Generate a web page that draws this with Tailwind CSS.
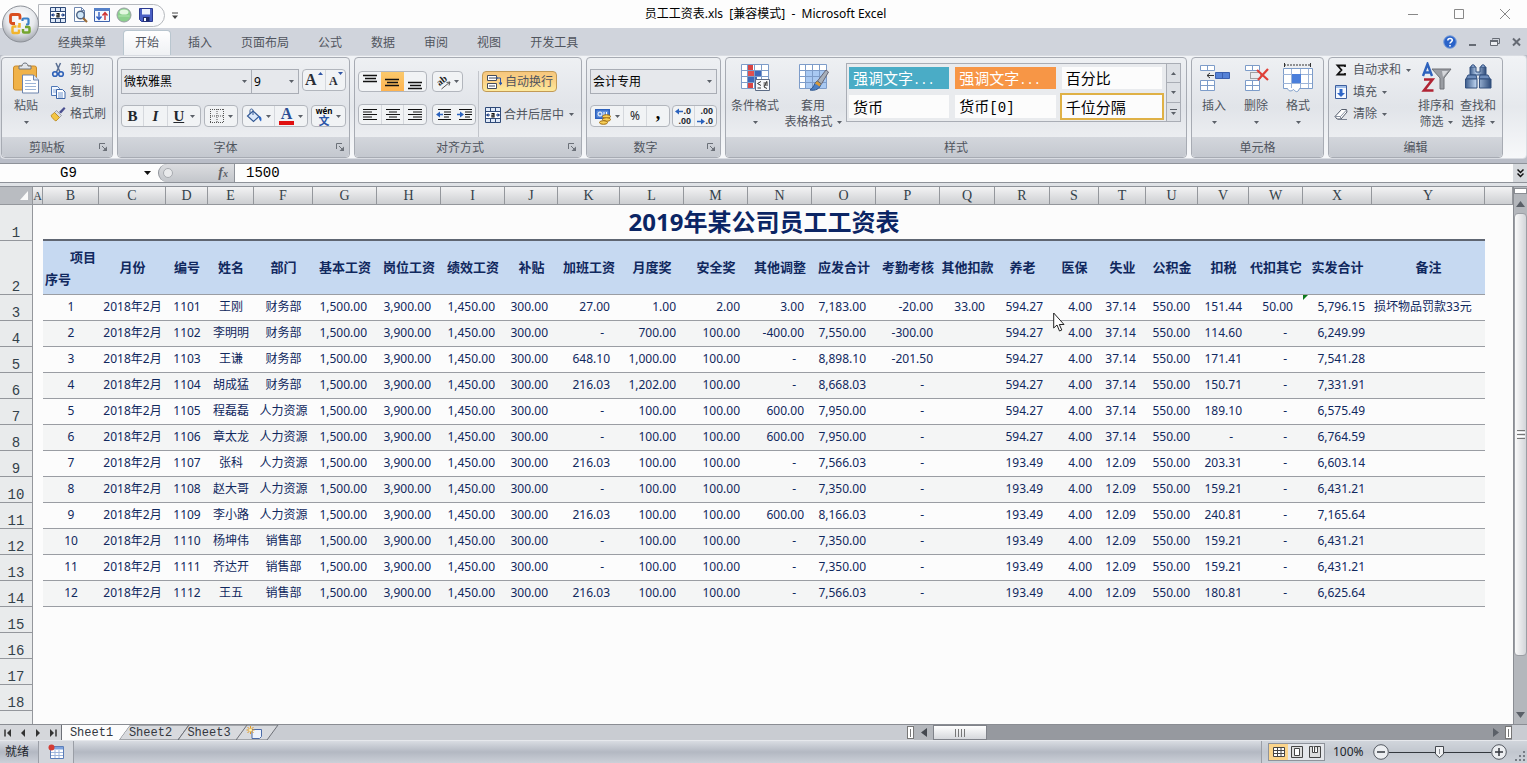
<!DOCTYPE html>
<html lang="zh-CN">
<head>
<meta charset="utf-8">
<title>员工工资表.xls [兼容模式] - Microsoft Excel</title>
<script src="https://cdn.jsdelivr.net/npm/@tailwindcss/browser@4"></script>
</head>
<body class="flex h-screen flex-col overflow-hidden bg-[#bfc3cc] font-['Noto_Sans','Noto_Sans_CJK_SC',sans-serif] text-xs leading-4 text-[#50555e]">

<svg class="hidden" aria-hidden="true">
  <symbol id="dd" viewBox="0 0 5 3"><path d="M0 0h5L2.5 3z" fill="#5b6068"/></symbol>
  <symbol id="launch" viewBox="0 0 9 9"><path d="M.5 6V.5H6M3 3l3 3" fill="none" stroke="#6b7078"/><path d="M8 3.500V8H3.500z" fill="#6b7078"/></symbol>
  <symbol id="merge" viewBox="0 0 16 16"><path d="M.5.5h15v15H.5z" fill="#dfe9f8" stroke="#2f4a78"/><path d="M.5 4.500h15M.5 11.500h15M5.500.5v4M10.500.5v4M5.500 11.500v4M10.500 11.500v4" stroke="#2f4a78"/><path d="M1 5h14v6H1z" fill="#fff"/><path d="M1.500 8H5M11 8h3.500" stroke="#1d3f86"/><path d="M3.500 6v4L1 8zM12.500 6v4L15 8z" fill="#1d3f86"/><path d="M6.500 6.500h2.500v3.500M9 8H7v2h2.600" fill="none" stroke="#111" stroke-width="1.200"/></symbol>
</svg>

<!-- Title bar -->
<header class="relative flex h-7 shrink-0 items-center justify-between bg-[#fdfdfd]">
  <div class="flex items-center pl-[38px]">
    <div class="mt-0.5 flex h-[23px] items-center gap-1.5 rounded-r-full border border-[#b5b8bd] bg-[#fbfbfc] pr-2.5 pl-[11px]">
      <button aria-label="合并后居中"><svg class="size-4"><use href="#merge"/></svg></button>
      <button aria-label="打印预览"><svg class="size-4" viewBox="0 0 16 16"><path d="M2.500.5h7l3 3v11h-10z" fill="#fff" stroke="#7088b0"/><path d="M9.500.5v3h3" fill="none" stroke="#7088b0"/><circle cx="8.500" cy="8" r="3.800" fill="#cfe6f8" stroke="#4d6284" stroke-width="1.400"/><path d="M11 11l4 4" stroke="#9a6a35" stroke-width="2.200"/></svg></button>
      <button aria-label="排序"><svg class="size-4" viewBox="0 0 16 16"><path d="M.5 1.500h15v13H.5z" fill="#f3f7fe" stroke="#3f63ac"/><path d="M0 1h16v3H0z" fill="#5580c8"/><path d="M5 5v7M2.500 9.500L5 12.500l2.500-3" fill="none" stroke="#2e5bc0" stroke-width="1.400"/><path d="M11 13V6M8.500 8.500L11 5.500l2.500 3" fill="none" stroke="#d03030" stroke-width="1.400"/></svg></button>
      <button aria-label="绿灯"><svg class="size-4" viewBox="0 0 16 16"><circle cx="8" cy="8" r="7" fill="#8bd08d" stroke="#9a9fa5"/><ellipse cx="8" cy="5" rx="4.500" ry="2.600" fill="#e2f7e0"/><path d="M2.500 9h11" stroke="#b5e6b4"/></svg></button>
      <button aria-label="保存"><svg class="size-4" viewBox="0 0 16 16"><path d="M1.500 1.500h13v13h-11l-2-2z" fill="#4a5fc4" stroke="#2b3a90"/><path d="M4 2h8v5.500H4z" fill="#eef2fd"/><path d="M5 10h6.500v4.500H5z" fill="#1f2b6b"/><path d="M6 11h2v3H6z" fill="#fff"/></svg></button>
    </div>
    <button class="ml-1.5 pt-1" aria-label="自定义快速访问工具栏"><svg class="h-2 w-2" viewBox="0 0 8 8"><path d="M1 1h6" stroke="#444"/><path d="M1 3.500h6L4 7z" fill="#444"/></svg></button>
  </div>
  <h1 class="pointer-events-none absolute inset-x-0 top-1.5 pl-1 text-center whitespace-pre text-black">员工工资表.xls  [兼容模式]  -  Microsoft Excel</h1>
  <div class="flex gap-[34px] pr-4">
    <button aria-label="最小化"><svg class="size-3" viewBox="0 0 12 12"><path d="M1 6.500h10" stroke="#888"/></svg></button>
    <button aria-label="最大化"><svg class="size-3" viewBox="0 0 12 12"><path d="M1.500 1.500h9v9h-9z" fill="none" stroke="#888"/></svg></button>
    <button aria-label="关闭"><svg class="size-3" viewBox="0 0 12 12"><path d="M1 1l10 10M11 1L1 11" stroke="#888"/></svg></button>
  </div>
  <button class="absolute top-1 left-0.5 z-10" aria-label="Office 按钮">
    <svg class="size-10" viewBox="0 0 40 40"><defs><radialGradient id="orb" cx=".5" cy=".35" r=".65"><stop offset="0" stop-color="#fff"/><stop offset=".6" stop-color="#e7e9ed"/><stop offset="1" stop-color="#a3a7af"/></radialGradient></defs><circle cx="18.500" cy="20" r="18" fill="url(#orb)" stroke="#8d9198"/>
      <path d="M13 19.500h-2.500a2 2 0 0 1-2-2v-5a2 2 0 0 1 2-2h5.500a2 2 0 0 1 2 2v3" fill="none" stroke="#d94e20" stroke-width="2.800"/>
      <path d="M20.500 17v-1.500a1 1 0 0 1 1-1h4a1 1 0 0 1 1 1v4a1 1 0 0 1-1 1H24" fill="none" stroke="#3b82c8" stroke-width="2.200"/>
      <path d="M14.500 22.500h-3a1 1 0 0 0-1 1v4.500a1 1 0 0 0 1 1h4.500a1 1 0 0 0 1-1v-2.500M17.500 19v3.500h-2" fill="none" stroke="#f2b52c" stroke-width="2.500"/>
      <path d="M21 25v2.500a1 1 0 0 0 1 1h4.500a1 1 0 0 0 1-1V24a1 1 0 0 0-1-1H23" fill="none" stroke="#74a52e" stroke-width="2.500"/></svg>
  </button>
</header>

<!-- Ribbon tabs -->
<nav class="flex h-[27px] shrink-0 items-end justify-between bg-[#d0d4dc] pl-[46px]">
  <div class="flex gap-[5px]">
    <button class="h-[25px] px-3">经典菜单</button>
    <button class="h-[25px] rounded-t border border-b-0 border-[#b9c6cf] bg-linear-to-b from-white to-[#eff1f4] px-[11px]">开始</button>
    <button class="h-[25px] px-3">插入</button>
    <button class="h-[25px] px-3">页面布局</button>
    <button class="h-[25px] px-3">公式</button>
    <button class="h-[25px] px-3">数据</button>
    <button class="h-[25px] px-3">审阅</button>
    <button class="h-[25px] px-3">视图</button>
    <button class="h-[25px] px-3">开发工具</button>
  </div>
  <div class="flex items-center gap-2.5 self-center pr-1">
    <button aria-label="帮助"><svg class="size-3.5" viewBox="0 0 14 14"><circle cx="7" cy="7" r="6.300" fill="#2a63c9" stroke="#7ea0d8"/><path d="M4.800 5.500C4.800 2.800 9.300 2.800 9.300 5.300 9.300 6.800 7 6.800 7 8.600M7 10v1.400" fill="none" stroke="#fff" stroke-width="1.600"/></svg></button>
    <button aria-label="最小化工作簿"><svg class="h-3 w-3" viewBox="0 0 12 12"><path d="M2 9h7" stroke="#666b74" stroke-width="2"/></svg></button>
    <button aria-label="还原工作簿"><svg class="h-3 w-3" viewBox="0 0 12 12"><path d="M3.500 3.500v-1h7v5h-2" fill="none" stroke="#666b74"/><path d="M1.500 4.500h7v5h-7z" fill="#eceef2" stroke="#666b74"/><path d="M1 5h8" stroke="#666b74" stroke-width="2"/></svg></button>
    <button aria-label="关闭工作簿"><svg class="h-3 w-3" viewBox="0 0 12 12"><path d="M2 2.500l7 7M9 2.500l-7 7" stroke="#666b74" stroke-width="2"/></svg></button>
  </div>
</nav>

<!-- Ribbon -->
<section class="h-[108px] shrink-0 bg-[#b9bdc7]" aria-label="功能区">
  <div class="flex h-[104px] gap-1 rounded border border-[#d9dce2] bg-linear-to-b from-[#f1f3f6] via-[#e6e9ed] to-[#f7f8fa] pt-px">

    <!-- 剪贴板 -->
    <div class="flex h-[101px] w-[112px] shrink-0 flex-col rounded border border-[#a7abb3] bg-linear-to-b from-[#eef0f3] via-[#e1e4e9] to-[#f3f4f6]">
      <div class="flex flex-1 pl-2">
        <button class="flex w-8 flex-col items-center pt-1">
          <svg class="size-8" viewBox="0 0 32 32"><rect x="3.500" y="4" width="23" height="24" rx="2" fill="#f0b248" stroke="#c8892b"/><path d="M9 7V4h3c0-4 6-4 6 0h3v3z" fill="#e3e6ea" stroke="#6e747d"/><path d="M12.500 13h11l5 5v13h-16z" fill="#fff" stroke="#6d84ad"/><path d="M23.500 13v5h5" fill="#dbe6f7" stroke="#6d84ad"/><path d="M15 18.500h6M15 21.500h11M15 24.500h11M15 27.500h11" stroke="#9db5d8"/></svg>
          <span class="mt-1">粘贴</span><span class="flex h-4 items-center"><svg class="h-[3px] w-[5px]"><use href="#dd"/></svg></span>
        </button>
        <div class="flex flex-col items-start pt-px pl-2">
          <button class="flex h-[22px] items-center gap-1"><svg class="size-4" viewBox="0 0 16 16"><path d="M6 1l4 9M10.500 1l-4 9" stroke="#5a6f93" stroke-width="1.500"/><circle cx="5" cy="12" r="2.300" fill="none" stroke="#2f62b8" stroke-width="1.600"/><circle cx="11" cy="12" r="2.300" fill="none" stroke="#2f62b8" stroke-width="1.600"/></svg>剪切</button>
          <button class="flex h-[22px] items-center gap-1"><svg class="size-4" viewBox="0 0 16 16"><path d="M1.500 2.500h6l2 2v7h-8z" fill="#f2f7ff" stroke="#4e77b6"/><path d="M3 6h5M3 8h5" stroke="#89a9d8"/><path d="M6.500 5.500h6l2.500 2.500v6.500H6.500z" fill="#fff" stroke="#3c66a8"/><path d="M8 9h5M8 11h5M8 13h5" stroke="#6f95cf"/></svg>复制</button>
          <button class="flex h-[22px] items-center gap-1"><svg class="size-4" viewBox="0 0 16 16"><path d="M9 6l5-5 1.500 1.500-4.500 5z" fill="#4a4f8f"/><path d="M6.500 4.500l5 5-2 2-5-5z" fill="#d8dbe2" stroke="#7d828c" stroke-width=".7"/><path d="M4.500 6.500l5 5L6 15C4 14 2 12 1 9.500z" fill="#f4c644" stroke="#b78518" stroke-width=".8"/></svg>格式刷</button>
        </div>
      </div>
      <div class="relative h-5 rounded-b bg-linear-to-b from-[#d3d6dc] to-[#c4c8cf] pr-5 text-center leading-[22px]">剪贴板<button class="absolute top-1.5 right-1" aria-label="剪贴板选项"><svg class="block size-[9px]"><use href="#launch"/></svg></button></div>
    </div>

    <!-- 字体 -->
    <div class="flex h-[101px] w-[233px] shrink-0 flex-col rounded border border-[#a7abb3] bg-linear-to-b from-[#eef0f3] via-[#e1e4e9] to-[#f3f4f6]">
      <div class="flex flex-1 flex-col gap-[11px] px-[3px] pt-[11px]">
        <div class="flex items-start">
          <label class="relative block w-[131px]"><span class="sr-only">字体</span><select class="h-[25px] w-full appearance-none border border-[#a9adb5] bg-[#e6e8ec] pl-0.5 text-xs leading-5 text-black"><option>微软雅黑</option></select><svg class="pointer-events-none absolute top-[11px] right-[5px] h-[3px] w-[5px]"><use href="#dd"/></svg></label>
          <label class="relative block w-[47px]"><span class="sr-only">字号</span><select class="h-[25px] w-full appearance-none border border-l-0 border-[#a9adb5] bg-[#e6e8ec] pl-0.5 text-xs leading-5 text-black"><option>9</option></select><svg class="pointer-events-none absolute top-[11px] right-[5px] h-[3px] w-[5px]"><use href="#dd"/></svg></label>
          <div class="ml-auto flex h-[22px] w-11 rounded-sm border border-[#b2b6bd] bg-[#f1f3f5] font-['Liberation_Serif',serif] font-bold text-[#2b2f36]">
            <button class="relative flex-1 border-r border-[#d5d8dd] pr-1.5 text-base leading-5" aria-label="增大字号">A<svg class="absolute top-0.5 right-0.5 h-[3px] w-[5px] rotate-180" viewBox="0 0 5 3"><path d="M0 0h5L2.500 3z" fill="#2f55a5"/></svg></button>
            <button class="relative flex-1 pt-0.5 pr-1 text-xs" aria-label="减小字号">A<svg class="absolute top-0.5 right-0.5 h-[3px] w-[5px]" viewBox="0 0 5 3"><path d="M0 0h5L2.500 3z" fill="#2f55a5"/></svg></button>
          </div>
        </div>
        <div class="flex h-[22px] justify-between">
          <div class="flex w-20 items-stretch rounded-sm border border-[#b2b6bd] bg-[#f1f3f5] font-['Liberation_Serif',serif] text-[15px] font-bold text-[#22262c]">
            <button class="w-[22px] border-r border-[#d5d8dd]">B</button><button class="w-6 border-r border-[#d5d8dd] italic">I</button>
            <button class="flex flex-1 items-center justify-evenly"><span class="underline">U</span><svg class="h-[3px] w-[5px]"><use href="#dd"/></svg></button>
          </div>
          <div class="flex w-[34px] rounded-sm border border-[#b2b6bd] bg-[#f1f3f5]"><button class="flex flex-1 items-center justify-evenly" aria-label="边框"><svg class="size-3.5" viewBox="0 0 14 14"><path d="M.5 0v14M7 0v14M13.500 0v14M0 .5h14M0 7h14M0 13.500h14" stroke="#555" stroke-dasharray="1 1"/></svg><svg class="h-[3px] w-[5px]"><use href="#dd"/></svg></button></div>
          <div class="flex w-[66px] rounded-sm border border-[#b2b6bd] bg-[#f1f3f5]">
            <button class="flex flex-1 items-center justify-evenly border-r border-[#d5d8dd]" aria-label="填充颜色"><svg class="size-4" viewBox="0 0 16 16"><path d="M7 3l6 5.500-5.500 5L1.500 8z" fill="#dbe8fa" stroke="#345a96" stroke-width="1.200"/><path d="M7 7V2.500C7 .5 4 .5 4 2.500V6" fill="none" stroke="#345a96"/><path d="M13 8c2.500.5 3 3 2 5.500-1.500-1-2.500-3-2-5.500z" fill="#2b66c4"/></svg><svg class="h-[3px] w-[5px]"><use href="#dd"/></svg></button>
            <button class="flex flex-1 items-center justify-evenly" aria-label="字体颜色"><span class="border-b-4 border-[#e01010] px-0.5 font-['Liberation_Serif',serif] text-base leading-[14px] font-bold text-[#2c4f94]">A</span><svg class="h-[3px] w-[5px]"><use href="#dd"/></svg></button>
          </div>
          <div class="flex w-[35px] rounded-sm border border-[#b2b6bd] bg-[#f1f3f5]"><button class="flex flex-1 items-center justify-evenly" aria-label="拼音指南"><span class="flex flex-col items-center text-[8px] leading-[8px] font-bold text-black"><span>wén</span><span class="text-[11px] leading-[11px] text-[#2b56a8]">文</span></span><svg class="h-[3px] w-[5px]"><use href="#dd"/></svg></button></div>
        </div>
      </div>
      <div class="relative h-5 rounded-b bg-linear-to-b from-[#d3d6dc] to-[#c4c8cf] pr-4 text-center leading-[22px]">字体<button class="absolute top-1.5 right-1" aria-label="字体选项"><svg class="block size-[9px]"><use href="#launch"/></svg></button></div>
    </div>

    <!-- 对齐方式 -->
    <div class="flex h-[101px] w-[228px] shrink-0 flex-col rounded border border-[#a7abb3] bg-linear-to-b from-[#eef0f3] via-[#e1e4e9] to-[#f3f4f6]">
      <div class="flex flex-1 pt-[13px] pl-[3px]">
        <div class="flex w-[121px] flex-col gap-3 border-r border-[#c2c5cb]">
          <div class="flex h-[21px] gap-[5px]">
            <div class="flex w-[69px] rounded-sm border border-[#b2b6bd] bg-[#f1f3f5]">
              <button class="flex flex-1 justify-center pt-0.5" aria-label="顶端对齐"><svg class="size-3.5" viewBox="0 0 14 14"><path d="M0 1.500h14M2 4.500h11M0 7.500h14" stroke="#111" stroke-width="1.500"/></svg></button>
              <button class="flex flex-1 items-center justify-center bg-linear-to-b from-[#fbc96b] to-[#fdb350]" aria-label="垂直居中"><svg class="size-3.5" viewBox="0 0 14 14"><path d="M0 4.500h14M2 7.500h11M0 10.500h14" stroke="#111" stroke-width="1.500"/></svg></button>
              <button class="flex flex-1 items-end justify-center" aria-label="底端对齐"><svg class="size-3.5" viewBox="0 0 14 14"><path d="M0 5.500h14M2 8.500h11M0 11.500h14" stroke="#111" stroke-width="1.500"/></svg></button>
            </div>
            <div class="flex w-[31px] rounded-sm border border-[#b2b6bd] bg-[#f1f3f5]"><button class="flex flex-1 items-center justify-evenly" aria-label="方向"><svg class="size-4" viewBox="0 0 16 16"><text x="1" y="11" font-family="Liberation Serif" font-size="10" font-weight="bold" fill="#222" transform="rotate(-38 4 8)">ab</text><path d="M5.500 15l8.500-7M14 8l-3.500.5M14 8l-1 3.500" stroke="#555" fill="none"/></svg><svg class="h-[3px] w-[5px]"><use href="#dd"/></svg></button></div>
          </div>
          <div class="flex h-[21px] gap-[5px]">
            <div class="flex w-[69px] rounded-sm border border-[#b2b6bd] bg-[#f1f3f5]">
              <button class="flex flex-1 items-center justify-center border-r border-[#d5d8dd]" aria-label="文本左对齐"><svg class="h-3 w-3.5" viewBox="0 0 14 12"><path d="M0 .5h14M0 3h9M0 5.500h14M0 8h9M0 10.500h14" stroke="#111"/></svg></button>
              <button class="flex flex-1 items-center justify-center border-r border-[#d5d8dd]" aria-label="居中"><svg class="h-3 w-3.5" viewBox="0 0 14 12"><path d="M0 .5h14M3 3h8M0 5.500h14M3 8h8M0 10.500h14" stroke="#111"/></svg></button>
              <button class="flex flex-1 items-center justify-center" aria-label="文本右对齐"><svg class="h-3 w-3.5" viewBox="0 0 14 12"><path d="M0 .5h14M5 3h9M0 5.500h14M5 8h9M0 10.500h14" stroke="#111"/></svg></button>
            </div>
            <div class="flex w-11 rounded-sm border border-[#b2b6bd] bg-[#f1f3f5]">
              <button class="flex flex-1 items-center justify-center" aria-label="减少缩进量"><svg class="size-4" viewBox="0 0 16 14"><path d="M2 1.500h13M8 4h7M8 6.500h7M8 9h5M2 11.500h13" stroke="#111" stroke-width="1.200"/><path d="M0 6.500L4 3.500v6z" fill="#2b62bd"/><path d="M3 6.500h4" stroke="#2b62bd" stroke-width="1.500"/></svg></button>
              <button class="flex flex-1 items-center justify-center" aria-label="增加缩进量"><svg class="size-4" viewBox="0 0 16 14"><path d="M2 1.500h13M8 4h7M8 6.500h7M8 9h5M2 11.500h13" stroke="#111" stroke-width="1.200"/><path d="M7 6.500L3 3.500v6z" fill="#2b62bd"/><path d="M0 6.500h4" stroke="#2b62bd" stroke-width="1.500"/></svg></button>
            </div>
          </div>
        </div>
        <div class="flex flex-col items-start gap-3 pl-[3px]">
          <button class="flex h-[21px] items-center gap-[3px] rounded-sm border border-[#c29a55] bg-linear-to-b from-[#f6c77d] via-[#fbd388] to-[#fdea9c] px-[3px]"><svg class="size-4" viewBox="0 0 16 16"><path d="M1.500 1.500h9v5h-9zM1.500 9.500h9v5h-9z" fill="#fff" stroke="#444c5c"/><path d="M3 4h9M3 12h6" stroke="#444c5c"/><path d="M10 4h4.500v5" fill="none" stroke="#2b56a8"/><path d="M12.500 8.500h4l-2 3z" fill="#2b56a8"/></svg>自动换行</button>
          <button class="flex h-[21px] items-center gap-[3px] pr-1 pl-[3px]"><svg class="size-4"><use href="#merge"/></svg>合并后居中<svg class="ml-0.5 h-[3px] w-[5px]"><use href="#dd"/></svg></button>
        </div>
      </div>
      <div class="relative h-5 rounded-b bg-linear-to-b from-[#d3d6dc] to-[#c4c8cf] pr-4 text-center leading-[22px]">对齐方式<button class="absolute top-1.5 right-1" aria-label="对齐方式选项"><svg class="block size-[9px]"><use href="#launch"/></svg></button></div>
    </div>

    <!-- 数字 -->
    <div class="flex h-[101px] w-[135px] shrink-0 flex-col rounded border border-[#a7abb3] bg-linear-to-b from-[#eef0f3] via-[#e1e4e9] to-[#f3f4f6]">
      <div class="flex flex-1 flex-col gap-[11px] px-[3px] pt-[11px]">
        <label class="relative block"><span class="sr-only">数字格式</span><select class="h-[25px] w-full appearance-none border border-[#a9adb5] bg-[#e6e8ec] pl-0.5 text-xs leading-5 text-black"><option>会计专用</option></select><svg class="pointer-events-none absolute top-[11px] right-[5px] h-[3px] w-[5px]"><use href="#dd"/></svg></label>
        <div class="flex h-[22px] justify-between">
          <div class="flex w-20 rounded-sm border border-[#b2b6bd] bg-[#f1f3f5] text-[#22262c]">
            <button class="flex w-[33px] items-center justify-evenly border-r border-[#d5d8dd]" aria-label="会计数字格式"><svg class="size-[18px]" viewBox="0 0 18 18"><path d="M1 2h15v10H1z" fill="#2d61bd"/><path d="M2.500 3.500h12v7h-12z" fill="#5d8fdd"/><circle cx="6" cy="7" r="2" fill="none" stroke="#fff"/><path d="M10 5v4M12.500 5v4" stroke="#fff"/><ellipse cx="12.500" cy="9.500" rx="4" ry="1.800" fill="#f7cf58" stroke="#a06c10"/><ellipse cx="12.500" cy="12.500" rx="4" ry="1.800" fill="#f7cf58" stroke="#a06c10"/><ellipse cx="9.500" cy="15.500" rx="4" ry="1.800" fill="#f7cf58" stroke="#a06c10"/></svg><svg class="h-[3px] w-[5px]"><use href="#dd"/></svg></button>
            <button class="flex-1 border-r border-[#d5d8dd]">%</button><button class="flex-1 pb-1.5 font-['Liberation_Serif',serif] text-lg leading-3 font-bold text-black">,</button>
          </div>
          <div class="flex w-[45px] rounded-sm border border-[#b2b6bd] bg-[#f1f3f5] font-['Liberation_Sans',sans-serif] text-[9px] leading-[10px] font-bold text-[#22262c]">
            <button class="flex flex-1 flex-col items-end justify-center border-r border-[#d5d8dd] pr-[3px]" aria-label="增加小数位数"><span class="flex items-center"><svg class="h-[7px] w-2" viewBox="0 0 8 7"><path d="M0 3.500L4 .5v6z" fill="#2b62bd"/><path d="M3 3.500h5" stroke="#2b62bd" stroke-width="1.500"/></svg>.0</span><span>.00</span></button>
            <button class="flex flex-1 flex-col items-end justify-center pr-[3px]" aria-label="减少小数位数"><span>.00</span><span class="flex items-center"><svg class="h-[7px] w-2" viewBox="0 0 8 7"><path d="M8 3.500L4 .5v6z" fill="#2b62bd"/><path d="M0 3.500h5" stroke="#2b62bd" stroke-width="1.500"/></svg>.0</span></button>
          </div>
        </div>
      </div>
      <div class="relative h-5 rounded-b bg-linear-to-b from-[#d3d6dc] to-[#c4c8cf] pr-4 text-center leading-[22px]">数字<button class="absolute top-1.5 right-1" aria-label="数字选项"><svg class="block size-[9px]"><use href="#launch"/></svg></button></div>
    </div>

    <!-- 样式 -->
    <div class="flex h-[101px] w-[462px] shrink-0 flex-col rounded border border-[#a7abb3] bg-linear-to-b from-[#eef0f3] via-[#e1e4e9] to-[#f3f4f6]">
      <div class="flex flex-1 pl-[5px]">
        <button class="flex w-12 flex-col items-center pt-1">
          <svg class="size-8" viewBox="0 0 32 32"><path d="M2.500 2.500h27v24h-27z" fill="#fff" stroke="#7d9cc9"/><path d="M8 3h6v5H8zM8 21h6v5H8z" fill="#d84444"/><path d="M9 8h13v6H9z" fill="#e05050"/><path d="M16 8h6v6h-6zM9 14h9v6H9z" fill="#3f68b8"/><path d="M2 8.500h27M2 14.500h27M2 20.500h27M8.500 2v25M15.500 2v25M22.500 2v25" stroke="#7d9cc9"/><path d="M16.500 17.500h14v11h-14z" fill="#f5f7fb" stroke="#5c6b85"/><path d="M22 19.500l-3.500 2 3.500 2M18.500 26H22M24.500 21h4.500M24.500 23h4.500M28 19l-3 6M25 25l3 1.500" stroke="#333" fill="none"/></svg>
          <span class="mt-1">条件格式</span><span class="flex h-4 items-center"><svg class="h-[3px] w-[5px]"><use href="#dd"/></svg></span>
        </button>
        <button class="ml-1 flex w-[60px] flex-col items-center pt-1">
          <svg class="size-8" viewBox="0 0 32 32"><path d="M2.500 2.500h27v24h-27z" fill="#fff" stroke="#7d9cc9"/><path d="M9 9h20v17H9z" fill="#a9c9f2"/><path d="M2 8.500h27M2 14.500h27M2 20.500h27M8.500 2v25M15.500 2v25M22.500 2v25" stroke="#7d9cc9"/><path d="M29 8l2.500 2-7 12-4-3z" fill="#a8b0ba" stroke="#667"/><path d="M20 19l4 3c-1 5-6 7-11 6 4-2 4-7 7-9z" fill="#4b7fc4" stroke="#2f578f"/><path d="M20 19l4 3-1.500 2.500-4.500-3z" fill="#d79a3b"/></svg>
          <span class="mt-1">套用</span><span class="flex h-4 items-center gap-1 whitespace-nowrap">表格格式<svg class="h-[3px] w-[5px]"><use href="#dd"/></svg></span>
        </button>
        <div class="mt-[5px] ml-[3px] flex h-[59px] w-[335px] border border-[#a9adb5] bg-[#e9ebee]">
          <div class="grid flex-1 grid-cols-3 gap-x-1.5 gap-y-1.5 py-[3px] pr-1 pl-0.5 text-[15px] leading-5 text-black">
            <button class="bg-[#4aacc6] pl-1 text-left text-white">强调文字<span class="font-['Liberation_Mono',monospace] text-xs">...</span></button>
            <button class="bg-[#f79646] pl-1 text-left text-white">强调文字<span class="font-['Liberation_Mono',monospace] text-xs">...</span></button>
            <button class="bg-[#fcfcfc] pl-1 text-left">百分比</button>
            <button class="bg-[#fcfcfc] pl-1 text-left">货币</button>
            <button class="bg-[#fcfcfc] pl-1 text-left">货币<span class="font-['Liberation_Mono',monospace] text-sm">[0]</span></button>
            <button class="bg-[#fcfcfc] pl-1 text-left outline-2 outline-[#dfb146]">千位分隔</button>
          </div>
          <div class="flex w-3.5 flex-col border-l border-[#a9adb5] bg-[#dde0e5]">
            <button class="flex flex-1 items-center justify-center" aria-label="上一行"><svg class="h-[3px] w-[5px] rotate-180"><use href="#dd"/></svg></button>
            <button class="flex flex-1 items-center justify-center border-y border-[#a9adb5]" aria-label="下一行"><svg class="h-[3px] w-[5px]"><use href="#dd"/></svg></button>
            <button class="flex flex-1 flex-col items-center justify-center gap-0.5" aria-label="更多样式"><span class="h-px w-[7px] bg-[#5b6068]"></span><svg class="h-[3px] w-[5px]"><use href="#dd"/></svg></button>
          </div>
        </div>
      </div>
      <div class="h-5 rounded-b bg-linear-to-b from-[#d3d6dc] to-[#c4c8cf] text-center leading-[22px]">样式</div>
    </div>

    <!-- 单元格 -->
    <div class="flex h-[101px] w-[133px] shrink-0 flex-col rounded border border-[#a7abb3] bg-linear-to-b from-[#eef0f3] via-[#e1e4e9] to-[#f3f4f6]">
      <div class="flex flex-1 pl-px">
        <button class="flex w-[42px] flex-col items-center pt-1">
          <svg class="size-8" viewBox="0 0 32 32"><path d="M2.500 3.500h14v5h-14zM2.500 18.500h14v10h-14zM9.500 3.500v5M9.500 18.500v10M2.500 23.500h14" fill="#fff" stroke="#7d9cc9"/><path d="M17.500 10.500h14v6h-14z" fill="#5581d6" stroke="#3a5fae"/><path d="M24.500 10.500v6" stroke="#3a5fae"/><path d="M9 13.500h7M12 11l-3 2.500L12 16" fill="none" stroke="#333"/></svg>
          <span class="mt-1">插入</span><span class="flex h-4 items-center"><svg class="h-[3px] w-[5px]"><use href="#dd"/></svg></span>
        </button>
        <button class="flex w-[42px] flex-col items-center pt-1">
          <svg class="size-8" viewBox="0 0 32 32"><path d="M5.500 3.500h14v5h-14zM5.500 18.500h14v10h-14zM12.500 3.500v5M12.500 18.500v10M5.500 23.500h14" fill="#fff" stroke="#7d9cc9"/><path d="M10.500 10.500h10v6h-10z" fill="none" stroke="#555" stroke-dasharray="1 1"/><path d="M17 8l11 10M28 7L18 18" stroke="#e04038" stroke-width="2.200"/></svg>
          <span class="mt-1">删除</span><span class="flex h-4 items-center"><svg class="h-[3px] w-[5px]"><use href="#dd"/></svg></span>
        </button>
        <button class="flex w-[42px] flex-col items-center pt-1">
          <svg class="size-8" viewBox="0 0 32 32"><path d="M1.500 6.500h29v20h-13c-2 5-4 3-6 1-2 2-5 2-6-1h-4z" fill="#fff" stroke="#7d9cc9"/><path d="M1 12.500h29M1 21.500h29M9.500 7v19M18.500 7v19M26.500 7v19" stroke="#9cb4d8"/><path d="M10 12h9v9h-9z" fill="#4b7fdb"/><path d="M2 3h26" stroke="#333" stroke-dasharray="2 1"/><path d="M2.500 1v4M28.500 1v4" stroke="#333"/></svg>
          <span class="mt-1">格式</span><span class="flex h-4 items-center"><svg class="h-[3px] w-[5px]"><use href="#dd"/></svg></span>
        </button>
      </div>
      <div class="h-5 rounded-b bg-linear-to-b from-[#d3d6dc] to-[#c4c8cf] text-center leading-[22px]">单元格</div>
    </div>

    <!-- 编辑 -->
    <div class="flex h-[101px] w-[175px] shrink-0 flex-col rounded border border-[#a7abb3] bg-linear-to-b from-[#eef0f3] via-[#e1e4e9] to-[#f3f4f6]">
      <div class="flex flex-1 justify-between pr-1.5 pl-1">
        <div class="flex flex-col items-start pt-px">
          <button class="flex h-[22px] items-center gap-1"><svg class="size-4" viewBox="0 0 16 16"><path d="M12 5V3.500H4.500L8.500 8l-4 4.500H12V11" fill="none" stroke="#111" stroke-width="1.800"/></svg>自动求和<svg class="ml-px h-[3px] w-[5px]"><use href="#dd"/></svg></button>
          <button class="flex h-[22px] items-center gap-1"><svg class="size-4" viewBox="0 0 16 16"><path d="M2.500 1.500h11v13h-11z" fill="#f5f9ff" stroke="#3d5f9e"/><path d="M3 2h10v2H3z" fill="#9fbde8"/><path d="M6.500 5h3v4H12l-4 4-4-4h2.500z" fill="#2f67c8"/></svg>填充<svg class="ml-px h-[3px] w-[5px]"><use href="#dd"/></svg></button>
          <button class="flex h-[22px] items-center gap-1"><svg class="size-4" viewBox="0 0 16 16"><path d="M2 10.500L8.500 3.500h5L14 6l-6 7H4z" fill="#fff" stroke="#555d6b"/><path d="M2 10.500h5.500L13.500 4M7.500 10.500V13" fill="none" stroke="#8891a0"/><path d="M5 13.500h9" stroke="#7b8392"/></svg>清除<svg class="ml-px h-[3px] w-[5px]"><use href="#dd"/></svg></button>
        </div>
        <div class="flex gap-1.5">
          <button class="flex w-9 flex-col items-center pt-1">
            <svg class="size-8" viewBox="0 0 32 32"><path d="M12 7h19l-7 9v11h-4V16z" fill="#9a9da3" stroke="#707378"/><path d="M22 9h6l-5 6z" fill="#d5d7db"/><path d="M3 14L7.500 2 12 14M4.500 10.500h6" fill="none" stroke="#2e62bd" stroke-width="2.400"/><path d="M4 17.500h8.500L4 28.500h9.500" fill="none" stroke="#b02434" stroke-width="2.600"/></svg>
            <span class="mt-1 whitespace-nowrap">排序和</span><span class="flex h-4 items-center gap-1 whitespace-nowrap">筛选<svg class="h-[3px] w-[5px]"><use href="#dd"/></svg></span>
          </button>
          <button class="flex w-9 flex-col items-center pt-1">
            <svg class="size-8" viewBox="0 0 32 32"><defs><linearGradient id="bino"><stop offset="0" stop-color="#3c5c8c"/><stop offset=".4" stop-color="#b6cdea"/><stop offset="1" stop-color="#2d4a78"/></linearGradient></defs><path d="M8 5h6v5h4V5h6v8H8z" fill="url(#bino)" stroke="#33507f"/><path d="M9 5c0-3 4-3 4 0M19 5c0-3 4-3 4 0" fill="#7f9cc8" stroke="#33507f"/><path d="M6 13h8l1 4H4zM18 13h8l2 4H17z" fill="#6d8cba" stroke="#33507f"/><path d="M3.500 17h11.500v9H3.500zM17.500 17H29v9H17.500z" fill="url(#bino)" stroke="#33507f"/></svg>
            <span class="mt-1 whitespace-nowrap">查找和</span><span class="flex h-4 items-center gap-1 whitespace-nowrap">选择<svg class="h-[3px] w-[5px]"><use href="#dd"/></svg></span>
          </button>
        </div>
      </div>
      <div class="h-5 rounded-b bg-linear-to-b from-[#d3d6dc] to-[#c4c8cf] text-center leading-[22px]">编辑</div>
    </div>
  </div>
</section>

<!-- Formula bar -->
<div class="flex h-5 shrink-0 items-stretch border-y border-[#8e9299] bg-[#fdfdfd] font-['Liberation_Mono',monospace] text-sm text-black">
  <input class="w-[137px] text-center" aria-label="名称框" value="G9">
  <button class="flex w-[21px] items-center justify-center" aria-label="名称列表"><svg class="h-1 w-[7px]" viewBox="0 0 7 4"><path d="M0 0h7L3.500 4z" fill="#111"/></svg></button>
  <div class="flex w-[77px] items-center justify-between rounded-l-full border-r border-l border-[#8e9299] bg-linear-to-b from-[#dcdde0] to-[#c3c6cb] pr-1.5 pl-1">
    <span class="size-2.5 rounded-full border border-[#a8abb0] bg-[#e9eaec]"></span>
    <button class="font-['Liberation_Serif',serif] text-sm font-bold text-[#5d6067] italic" aria-label="插入函数">f<span class="text-[10px]">x</span></button>
  </div>
  <input class="min-w-0 flex-1 pl-[11px]" aria-label="编辑栏" value="1500">
  <button class="flex w-3.5 items-center justify-center bg-[#d5d8dc]" aria-label="展开编辑栏"><svg class="h-[9px] w-[7px]" viewBox="0 0 7 9"><path d="M.5.5l3 3 3-3M.5 4.500l3 3 3-3" fill="none" stroke="#111" stroke-width="1.500"/></svg></button>
</div>
<div class="h-1 shrink-0 border-b border-[#8e9299] bg-[#dfe2e6]"></div>

<!-- Worksheet -->
<main class="flex min-h-0 flex-1">
  <div class="min-w-0 flex-1 overflow-hidden bg-[#fcfcfc]">
    <table class="w-full table-fixed border-separate border-spacing-0 whitespace-nowrap text-[#10285e]">
      <colgroup>
        <col class="w-[33px]"><col class="w-[10px]"><col class="w-[56px]"><col class="w-[67px]"><col class="w-[42px]"><col class="w-[46px]"><col class="w-[59px]"><col class="w-[64px]"><col class="w-[64px]"><col class="w-[64px]"><col class="w-[53px]"><col class="w-[62px]"><col class="w-[64px]"><col class="w-[64px]"><col class="w-[64px]"><col class="w-[64px]"><col class="w-[64px]"><col class="w-[55px]"><col class="w-[55px]"><col class="w-[49px]"><col class="w-[47px]"><col class="w-[52px]"><col class="w-[51px]"><col class="w-[54px]"><col class="w-[69px]"><col class="w-[113px]"><col>
      </colgroup>
      <thead><tr id="letters"></tr></thead>
      <tbody id="grid"></tbody>
    </table>
  </div>
  <div class="flex w-3.5 shrink-0 flex-col items-center border-l border-[#8a8d93] bg-[#b4b7bc]">
    <div class="my-px h-1.5 w-full border border-[#8a8d93] bg-white"></div>
    <button class="flex h-[18px] w-full items-center justify-center" aria-label="向上滚动"><svg class="h-1.5 w-[9px]" viewBox="0 0 9 6"><path d="M0 6h9L4.500 0z" fill="#5b6068"/></svg></button>
    <div class="flex w-full flex-[445] flex-col items-center justify-center gap-px rounded-sm border border-[#9b9ea4] bg-linear-to-r from-[#fafafa] to-[#d3d5d9]">
      <span class="h-px w-2 bg-[#777]"></span><span class="h-px w-2 bg-white"></span><span class="h-px w-2 bg-[#777]"></span><span class="h-px w-2 bg-white"></span><span class="h-px w-2 bg-[#777]"></span>
    </div>
    <div class="w-full flex-[50]"></div>
    <button class="flex h-[18px] w-full items-center justify-center" aria-label="向下滚动"><svg class="h-1.5 w-[9px]" viewBox="0 0 9 6"><path d="M0 0h9L4.500 6z" fill="#5b6068"/></svg></button>
  </div>
</main>

<!-- Sheet tabs and horizontal scroll bar -->
<div class="flex h-4 shrink-0 items-stretch border-t border-[#8a8d93] bg-[#c9ccd2]">
  <div class="flex w-[62px] items-center justify-around border-r border-[#6d7077] bg-[#d5d7db]">
    <button aria-label="第一张"><svg class="block h-2 w-2" viewBox="0 0 8 8"><path d="M1 .5v7" stroke="#333" stroke-width="1.500"/><path d="M7 0v8L3 4z" fill="#333"/></svg></button>
    <button aria-label="上一张"><svg class="block h-2 w-2" viewBox="0 0 8 8"><path d="M6 0v8L2 4z" fill="#333"/></svg></button>
    <button aria-label="下一张"><svg class="block h-2 w-2" viewBox="0 0 8 8"><path d="M2 0v8l4-4z" fill="#333"/></svg></button>
    <button aria-label="最后一张"><svg class="block h-2 w-2" viewBox="0 0 8 8"><path d="M7 .5v7" stroke="#333" stroke-width="1.500"/><path d="M1 0v8l4-4z" fill="#333"/></svg></button>
  </div>
  <div class="flex font-['Liberation_Mono',monospace] text-xs leading-4 text-[#33373e]">
    <button class="relative z-10 w-[57px] bg-[#fcfcfc] pl-0.5"><svg class="absolute top-0 left-full h-[15px] w-3" viewBox="0 0 12 15"><path d="M0 0h11L0 15z" fill="#fcfcfc"/></svg>Sheet1</button>
    <button class="relative w-[59px] pl-1"><svg class="absolute top-0 left-0 h-[15px] w-[71px]" viewBox="0 0 71 15"><path d="M0 15L11 0h59L59 15z" fill="#d8dade" stroke="#6d7077"/></svg><span class="relative">Sheet2</span></button>
    <button class="relative w-[58px] pl-1"><svg class="absolute top-0 left-0 h-[15px] w-[71px]" viewBox="0 0 71 15"><path d="M0 15L11 0h59L59 15z" fill="#d8dade" stroke="#6d7077"/></svg><span class="relative">Sheet3</span></button>
    <button class="relative w-11" aria-label="插入工作表"><svg class="block h-[15px] w-[43px]" viewBox="0 0 43 15"><path d="M0 15L11 0h31L31 15z" fill="#d8dade" stroke="#6d7077"/><path d="M16 4.500h9.500v7l-2 2H16z" fill="#eef3fc" stroke="#4b6ba8"/><path d="M14.500 1v8M10.500 5h8M11.500 2l6 6M17.500 2l-6 6" stroke="#e39a22"/><circle cx="14.500" cy="5" r="1.500" fill="#fff3b0"/></svg></button>
  </div>
  <div class="flex-1"></div>
  <div class="my-px flex w-[7px] items-center justify-center border border-[#777] bg-white"><span class="h-2 w-px bg-[#777]"></span></div>
  <div class="mr-[15px] flex w-[598px] items-stretch bg-[#96999f]">
    <button class="flex w-[19px] items-center justify-center bg-[#b4b7bc]" aria-label="向左滚动"><svg class="h-[9px] w-1.5" viewBox="0 0 6 9"><path d="M6 0v9L0 4.500z" fill="#44484f"/></svg></button>
    <div class="flex w-[54px] items-center justify-center gap-0.5 border border-[#80838a] bg-linear-to-b from-white to-[#d6d8dc]"><span class="h-2 w-px bg-[#777]"></span><span class="h-2 w-px bg-[#777]"></span><span class="h-2 w-px bg-[#777]"></span><span class="h-2 w-px bg-[#777]"></span></div>
    <button class="mr-px ml-auto flex w-4 items-center justify-center" aria-label="向右滚动"><svg class="h-[9px] w-1.5" viewBox="0 0 6 9"><path d="M0 0v9l6-4.500z" fill="#5b6068"/></svg></button>
    <div class="my-px flex w-[7px] items-center justify-center border border-[#777] bg-white"><span class="h-2 w-px bg-[#777]"></span></div>
  </div>
</div>

<!-- Status bar -->
<footer class="flex h-[23px] shrink-0 items-center border-t border-[#e6e8ec] bg-linear-to-b from-[#d9dce2] via-[#b3b8c2] to-[#ccd0d8] text-[#22262c]">
  <span class="w-[38px] pl-[5px]">就绪</span>
  <div class="flex h-full w-9 items-center justify-center border-x border-[#9a9ea6] bg-[#d3d6dc]"><button aria-label="录制宏"><svg class="block size-4" viewBox="0 0 16 16"><path d="M2.500 2.500h13v12h-13z" fill="#fff" stroke="#5b7db8"/><path d="M3 3h12v2.500H3z" fill="#7fa3dd"/><path d="M3 8.500h12M3 11.500h12M7 6v8M11 6v8" stroke="#9fb6dc"/><circle cx="3.500" cy="3.500" r="3" fill="#d33b34"/></svg></button></div>
  <div class="h-full flex-1 border-r border-[#9a9ea6]"></div>
  <div class="flex h-full items-center bg-[#ccd0d7]/60 pl-1.5">
    <div class="flex h-[18px] border border-[#8f939b] bg-[#e4e6ea]">
      <button class="flex w-[19px] items-center justify-center bg-[#fbd48a]" aria-label="普通"><svg class="size-3" viewBox="0 0 12 12"><path d="M.5 1.500h11v9H.5zM.5 4.500h11M.5 7.500h11M4.500 1.500v9M8 1.500v9" fill="#fff" stroke="#444"/></svg></button>
      <button class="flex w-[18px] items-center justify-center" aria-label="页面布局"><svg class="size-3" viewBox="0 0 12 12"><path d="M.5.5h11v11H.5z" fill="#ddd" stroke="#444"/><path d="M3.500 2.500h5v7h-5z" fill="#fff" stroke="#444"/></svg></button>
      <button class="flex w-[18px] items-center justify-center" aria-label="分页预览"><svg class="size-3" viewBox="0 0 12 12"><path d="M.5.5h11v11H.5z" fill="#ddd" stroke="#444"/><path d="M3.500.5v6h2v-6M5.500 6.500h3v-6" fill="#fff" stroke="#444"/></svg></button>
    </div>
    <button class="ml-2 w-[34px] text-left">100%</button>
    <button class="ml-1.5" aria-label="缩小"><svg class="block size-4" viewBox="0 0 16 16"><circle cx="8" cy="8" r="7.300" fill="#eceef1" stroke="#555a62"/><path d="M4 8h8" stroke="#33373e" stroke-width="1.500"/></svg></button>
    <label class="relative flex h-4 w-[102px] items-center"><span class="sr-only">显示比例</span>
      <span class="h-px w-full bg-[#33373e]"></span>
      <svg class="absolute top-0.5 left-[46px] h-3 w-[9px]" viewBox="0 0 9 12"><path d="M.5.5h8v7.500l-4 3.500L.5 8z" fill="#f0f1f3" stroke="#44484f"/><path d="M4.500 3v5" stroke="#8a8d93"/></svg>
      <input type="range" min="0" max="100" value="50" class="absolute inset-0 opacity-0">
    </label>
    <button aria-label="放大"><svg class="block size-4" viewBox="0 0 16 16"><circle cx="8" cy="8" r="7.300" fill="#eceef1" stroke="#555a62"/><path d="M4 8h8M8 4v8" stroke="#33373e" stroke-width="1.500"/></svg></button>
    <svg class="mt-2 ml-2 h-3 w-3" viewBox="0 0 12 12"><path d="M8 1h2v2H8zM4 5h2v2H4zM8 5h2v2H8zM0 9h2v2H0zM4 9h2v2H4zM8 9h2v2H8z" fill="#777c85"/></svg>
  </div>
</footer>

<!-- Mouse pointer -->
<svg class="pointer-events-none absolute top-[312px] left-[1053px] h-5 w-3" viewBox="0 0 12 20"><path d="M.7 1v15l3.300-3 2.500 6 2.300-1-2.500-5.500h4.700z" fill="#fff" stroke="#222"/></svg>

<script>
  const letters = 'ABCDEFGHIJKLMNOPQRSTUVWXY'.split('');
  const colHead = 'h-[18px] border-r border-b border-[#94979c] bg-linear-to-b from-[#f3f3f4] to-[#cdcfd2] p-0 font-["Liberation_Serif",serif] leading-4 font-normal text-[#33414a]';
  const rowHead = 'border-r border-b border-[#94979c] bg-[#e9ebec] p-0 align-bottom font-["Liberation_Mono",monospace] text-sm leading-[14px] font-normal text-[#33414a]';
  const corner = '<th class="border-r border-b border-[#94979c] bg-[#b9bcc1] p-0"><svg class="ml-auto block h-2.5 w-3" viewBox="0 0 12 10"><path d="M8 0v9H0z" fill="#fafafa"/></svg></th>';
  document.getElementById('letters').innerHTML =
    corner + letters.map((l, i) => `<th scope="col" class='${colHead} ${i ? 'text-sm' : 'text-xs'}'>${l}</th>`).join('') + `<th class='${colHead}'></th>`;

  const heads = ['月份','编号','姓名','部门','基本工资','岗位工资','绩效工资','补贴','加班工资','月度奖','安全奖','其他调整','应发合计','考勤考核','其他扣款','养老','医保','失业','公积金','扣税','代扣其它','实发合计','备注'];
  const num = n => `<th scope="row" class='${rowHead}'>${n}</th>`;

  let html = `<tr class="h-9">${num(1)}<td></td><td colspan="24" class="border-b-2 border-[#5f6672] p-0 text-center text-2xl leading-8 font-bold text-[#0b2564]">2019年某公司员工工资表</td><td></td></tr>`;
  html += `<tr class="h-[54px] text-[13px]">${num(2)}<td></td>
    <th class="border-b border-[#9a9da3] bg-[#c6d9f1] py-0 pr-[3px] pl-0.5 leading-[22px]"><div class="text-right">项目</div><div class="text-left">序号</div></th>` +
    heads.map(h => `<th class="border-b border-[#9a9da3] bg-[#c6d9f1] p-0 pb-0.5">${h}</th>`).join('') + '<td></td></tr>';

  // Per employee: id, name, department, then columns K..Y
  const people = [
    '1101|王刚|财务部|27.00|1.00|2.00|3.00|7,183.00|-20.00|33.00|594.27|4.00|37.14|550.00|151.44|50.00|5,796.15|损坏物品罚款33元',
    '1102|李明明|财务部|-|700.00|100.00|-400.00|7,550.00|-300.00||594.27|4.00|37.14|550.00|114.60|-|6,249.99|',
    '1103|王谦|财务部|648.10|1,000.00|100.00|-|8,898.10|-201.50||594.27|4.00|37.14|550.00|171.41|-|7,541.28|',
    '1104|胡成猛|财务部|216.03|1,202.00|100.00|-|8,668.03|-||594.27|4.00|37.14|550.00|150.71|-|7,331.91|',
    '1105|程磊磊|人力资源|-|100.00|100.00|600.00|7,950.00|-||594.27|4.00|37.14|550.00|189.10|-|6,575.49|',
    '1106|章太龙|人力资源|-|100.00|100.00|600.00|7,950.00|-||594.27|4.00|37.14|550.00|-|-|6,764.59|',
    '1107|张科|人力资源|216.03|100.00|100.00|-|7,566.03|-||193.49|4.00|12.09|550.00|203.31|-|6,603.14|',
    '1108|赵大哥|人力资源|-|100.00|100.00|-|7,350.00|-||193.49|4.00|12.09|550.00|159.21|-|6,431.21|',
    '1109|李小路|人力资源|216.03|100.00|100.00|600.00|8,166.03|-||193.49|4.00|12.09|550.00|240.81|-|7,165.64|',
    '1110|杨坤伟|销售部|-|100.00|100.00|-|7,350.00|-||193.49|4.00|12.09|550.00|159.21|-|6,431.21|',
    '1111|齐达开|销售部|-|100.00|100.00|-|7,350.00|-||193.49|4.00|12.09|550.00|159.21|-|6,431.21|',
    '1112|王五|销售部|216.03|100.00|100.00|-|7,566.03|-||193.49|4.00|12.09|550.00|180.81|-|6,625.64|'
  ];
  // Right padding of the numeric columns G..X
  const wide = 'pr-[10px]', mid = 'pr-[8px]', tight = 'pr-[7px]';
  const pads = [wide,wide,wide,wide,wide,mid,mid,mid,wide,tight,wide,tight,tight,wide,mid,tight,wide,tight];
  people.forEach((line, i) => {
    const [id, name, dept, ...rest] = line.split('|');
    const note = rest.pop();
    const values = ['1,500.00', '3,900.00', '1,450.00', '300.00', ...rest];
    const base = 'border-b border-[#9a9da3] p-0 pb-px';
    html += `<tr class="h-[26px]">${num(i + 3)}<td></td>`;
    const bg = i % 2 ? 'bg-[#f4f5f5]' : 'bg-[#fcfcfc]';
    [i + 1, '2018年2月', id, name, dept].forEach(v => { html += `<td class="${base} ${bg} text-center">${v}</td>`; });
    values.forEach((v, c) => {
      const mark = i === 0 && c === 17 ? '<svg class="absolute top-0 left-0 size-[5px]" viewBox="0 0 5 5"><path d="M0 0h5L0 5z" fill="#0d7a1c"/></svg>' : '';
      html += `<td class="relative border-b border-[#9a9da3] py-0 pb-px pl-0 ${bg} text-right ${v === '-' ? 'pr-[16px]' : pads[c]}">${mark}${v}</td>`;
    });
    html += `<td class="${base} ${bg}"><span class="pl-0.5">${note}</span></td><td></td></tr>`;
  });
  for (let n = 15; n <= 18; n++) html += `<tr class="h-[26px]">${num(n)}<td colspan="26"></td></tr>`;
  html += `<tr class="h-[26px]">${num('')}<td colspan="26"></td></tr>`;
  document.getElementById('grid').innerHTML = html;
</script>
</body>
</html>
